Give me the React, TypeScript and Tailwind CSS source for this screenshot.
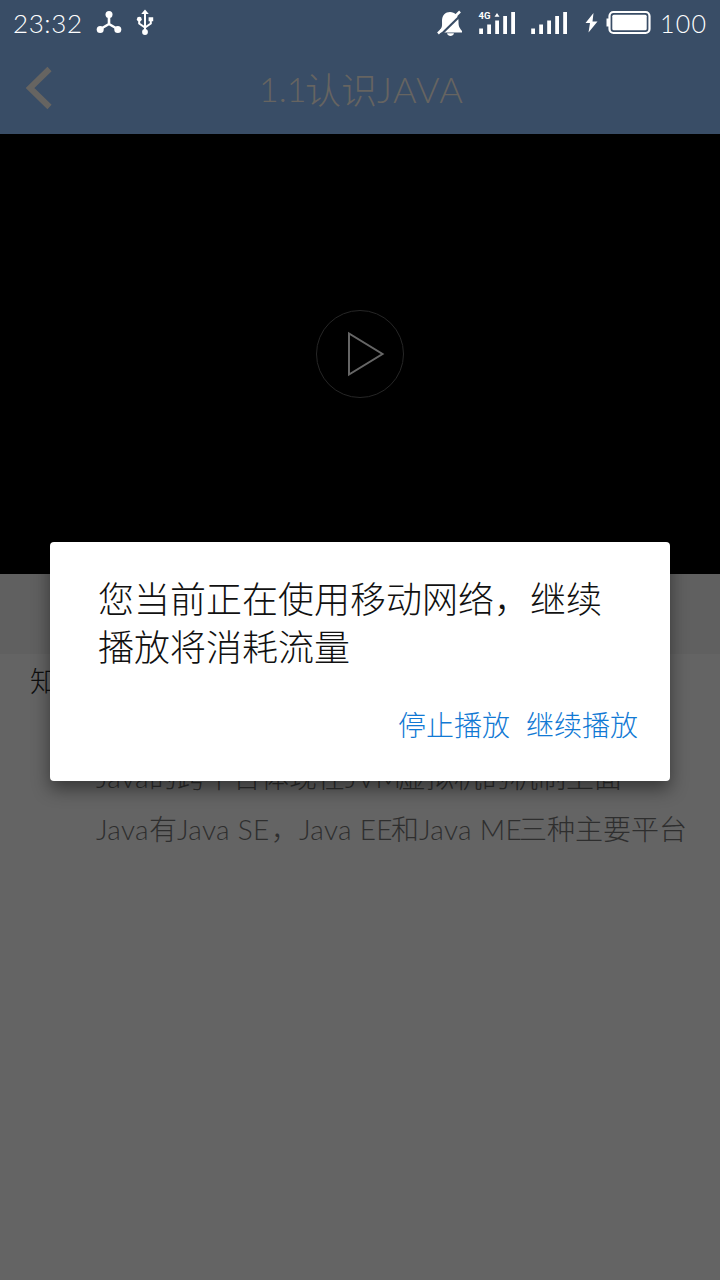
import type { ReactNode } from "react";

function Latin({ children, w }: { children: ReactNode; w: string }) {
  return <span className={`inline-block whitespace-nowrap font-['Lato','Noto_Sans_CJK_SC',sans-serif] font-light tracking-[0.3px] ${w}`}>{children}</span>;
}

function StatusBar() {
  return (
    <div className="flex h-[46px] items-center text-white">
      <span className="ml-[13px] w-[72px] whitespace-nowrap font-['Lato',sans-serif] text-[26px] leading-[46px] font-light tracking-[0.6px]">23:32</span>
      <svg className="ml-[11px]" width="26" height="26" viewBox="0 0 26 26" fill="white">
        <path d="M13 5v9M13 14 4.500 19M13 14l8.500 5" stroke="white" strokeWidth="2.600" />
        <circle cx="13" cy="4.500" r="3.500" /><circle cx="4.200" cy="19.500" r="3.500" /><circle cx="21.800" cy="19.500" r="3.500" />
      </svg>
      <svg className="ml-[14px]" width="18" height="28" viewBox="0 0 18 28" fill="white">
        <path d="M9 3v18M3.200 9v5.500L9 18.500l5.800-4V9" fill="none" stroke="white" strokeWidth="2" />
        <path d="M9 0.500 12.800 5h-7.600zM12.600 8.200h4.600v4h-4.600z" /><circle cx="3.300" cy="10.200" r="2.400" /><circle cx="9" cy="23" r="2.900" />
      </svg>
      <svg className="ml-auto" width="28" height="28" viewBox="0 0 28 28">
        <path d="M4 21c2.500-2.500 2-5 2-9C6 6 9.500 3 14 3c5 0 8.500 3.500 8.500 9s.5 6 3.500 10v1.500H4z" fill="white" />
        <path d="M11 24.300h7c-.7 3.500-6.300 3.500-7 0z" fill="white" />
        <path d="M4.500 26 27 4" stroke="#394d66" strokeWidth="2.200" />
        <path d="M2 24.500 24 2.500" stroke="white" strokeWidth="2.500" />
      </svg>
      <svg className="ml-[14px]" width="38" height="28" viewBox="0 0 38 28" fill="white">
        <path d="M1.200 19.500h3.800v5.500H1.200zM9.200 15.500h3.800V25H9.200zM17.200 11.500h3.800V25h-3.800zM25.200 7h3.800v18h-3.800zM33.200 3h3.800v22h-3.800zM16.500 7.800 19 4l2.500 3.800z" />
        <text x="0.500" y="10.300" fontFamily="Roboto, sans-serif" fontSize="9.500" fontWeight="700">4G</text>
      </svg>
      <svg className="ml-[14px]" width="38" height="28" viewBox="0 0 38 28" fill="white">
        <path d="M1.200 19.500h3.800v5.500H1.200zM9.200 15.500h3.800V25H9.200zM17.200 11.500h3.800V25h-3.800zM25.200 7h3.800v18h-3.800zM33.200 3h3.800v22h-3.800z" />
      </svg>
      <svg className="ml-[17px]" width="13" height="24" viewBox="0 0 13 24" fill="white"><path d="M8.500 2 .5 12h4.500L3.500 21.500l9-11H7.500z" /></svg>
      <svg className="ml-[8px]" width="46" height="28" viewBox="0 0 46 28">
        <rect x="3.500" y="3" width="40" height="21" rx="4" fill="none" stroke="white" strokeWidth="2.200" />
        <rect x="6.300" y="5.800" width="34.400" height="15.400" rx="1.500" fill="white" />
        <path d="M3 9.500H.5v8H3z" fill="white" />
      </svg>
      <span className="ml-[8px] mr-[12px] w-[48px] whitespace-nowrap font-['Lato',sans-serif] text-[25px] leading-[48px] font-light tracking-[1.300px]">100</span>
    </div>
  );
}

export default function App() {
  return (
    <main className="relative flex h-[1280px] w-[720px] flex-col overflow-hidden bg-[#646464] font-['Noto_Sans_CJK_SC',sans-serif] font-light">
      <header className="h-[134px] shrink-0 bg-[#394d66]">
        <StatusBar />
        <div className="grid h-[86px] grid-cols-[72px_1fr_72px] items-center text-[#666461]">
          <svg className="-mt-[2px] ml-[25px]" width="28" height="44" viewBox="0 0 28 44" fill="none" stroke="currentColor" strokeWidth="6"><path d="M24.500 3 5 22l19.500 19" /></svg>
          <h1 className="flex items-center pl-[187px] whitespace-nowrap text-[36px] leading-[82px] font-light">
            <span className="w-[46px] font-['Lato',sans-serif] text-[34px] font-light">1.1</span><span className="pb-[3px]">认识</span>
            <span className="w-[90px] font-['Lato',sans-serif] text-[36px] font-light tracking-[1.3px]">JAVA</span>
          </h1>
        </div>
      </header>
      <section className="flex h-[440px] shrink-0 items-center justify-center bg-black">
        <svg width="90" height="90" viewBox="0 0 90 90" fill="none">
          <circle cx="45" cy="45" r="43.500" stroke="#262626" />
          <path d="M34 24.500v41L67.500 45z" stroke="#666666" strokeWidth="2" />
        </svg>
      </section>
      <div className="h-[80px] shrink-0 bg-[#606060]" />
      <section className="pt-[4px] text-[28px] text-[#2e2e2e]">
        <h2 className="pl-[30px] leading-[44px] font-light text-[#0e0e0e]">知识点</h2>
        <div className="mt-[49px] pl-[96px] leading-[51px] whitespace-nowrap">
          <p><Latin w="w-[53px]">Java</Latin>的跨平台体现在<Latin w="w-[53px]">JVM</Latin>虚拟机的机制上面</p>
          <p><Latin w="w-[53px]">Java</Latin>有<Latin w="w-[94px]">Java SE</Latin>，<Latin w="w-[92px]">Java EE</Latin>和<Latin w="w-[100px]">Java ME</Latin>三种主要平台</p>
        </div>
      </section>
      <div role="dialog" aria-modal="true" className="absolute top-[542px] left-[50px] flex h-[239px] w-[620px] flex-col justify-between rounded-[4px] bg-white px-[32px] pt-[31px] pb-[33px] shadow-[0_8px_18px_rgba(0,0,0,0.45)]">
        <p className="px-[16px] text-[36px] leading-[48px] text-[#111111]">您当前正在使用移动网络，继续<br />播放将消耗流量</p>
        <div className="flex justify-end gap-[16px] text-[28px] leading-[48px] text-[#1179d4]">
          <button className="font-light">停止播放</button><button className="font-light">继续播放</button>
        </div>
      </div>
    </main>
  );
}
